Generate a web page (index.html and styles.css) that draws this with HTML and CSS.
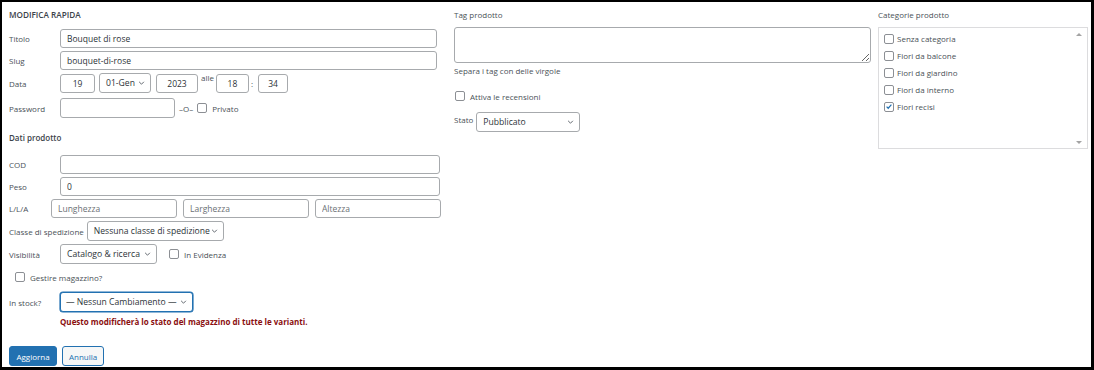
FILE: index.html
```html
<!DOCTYPE html>
<html lang="it">
<head>
    <meta charset="UTF-8">
    <title>Modifica rapida</title>
    <link rel="stylesheet" href="styles.css">
</head>
<body>
    <div class="quick-edit">
        <!-- left column -->
        <div class="col col-left">
            <h3 class="col-title caps">MODIFICA RAPIDA</h3>

            <div class="row">
                <span class="lbl">Titolo</span>
                <input class="field w-title" type="text" value="Bouquet di rose">
            </div>
            <div class="row">
                <span class="lbl">Slug</span>
                <input class="field w-title" type="text" value="bouquet-di-rose">
            </div>
            <div class="row">
                <span class="lbl">Data</span>
                <input class="field center w-day" type="text" value="19">
                <div class="select w-month"><span>01-Gen</span><svg class="chev" viewBox="0 0 8 5"><path d="M1 1l3 3 3-3"/></svg></div>
                <input class="field center w-year" type="text" value="2023">
                <span class="alle">alle</span>
                <input class="field center w-hour" type="text" value="18">
                <span class="colon">:</span>
                <input class="field center w-min" type="text" value="34">
            </div>
            <div class="row spaced">
                <span class="lbl">Password</span>
                <input class="field w-pass" type="text" value="">
                <span class="or">–O–</span>
                <span class="check"></span>
                <span class="check-label">Privato</span>
            </div>

            <h4 class="section-title">Dati prodotto</h4>

            <div class="row">
                <span class="lbl">COD</span>
                <input class="field w-long" type="text" value="">
            </div>
            <div class="row">
                <span class="lbl">Peso</span>
                <input class="field w-long" type="text" value="0">
            </div>
            <div class="row">
                <span class="lbl short">L/L/A</span>
                <div class="dims">
                    <input class="field" type="text" placeholder="Lunghezza">
                    <input class="field" type="text" placeholder="Larghezza">
                    <input class="field" type="text" placeholder="Altezza">
                </div>
            </div>
            <div class="row">
                <span class="lbl auto">Classe di spedizione</span>
                <div class="select w-ship"><span>Nessuna classe di spedizione</span><svg class="chev" viewBox="0 0 8 5"><path d="M1 1l3 3 3-3"/></svg></div>
            </div>
            <div class="row">
                <span class="lbl">Visibilità</span>
                <div class="select w-vis"><span>Catalogo &amp; ricerca</span><svg class="chev" viewBox="0 0 8 5"><path d="M1 1l3 3 3-3"/></svg></div>
                <span class="check ml-feat"></span>
                <span class="check-label">In Evidenza</span>
            </div>
            <div class="check-row">
                <span class="check"></span>
                <span class="check-label">Gestire magazzino?</span>
            </div>
            <div class="row stock">
                <span class="lbl">In stock?</span>
                <div class="select focus w-stock"><span>— Nessun Cambiamento —</span><svg class="chev" viewBox="0 0 8 5"><path d="M1 1l3 3 3-3"/></svg></div>
            </div>
            <p class="warning">Questo modificherà lo stato del magazzino di tutte le varianti.</p>

            <div class="actions">
                <span class="btn primary">Aggiorna</span>
                <span class="btn">Annulla</span>
            </div>
        </div>

        <!-- middle column -->
        <div class="col col-mid">
            <h3 class="col-title">Tag prodotto</h3>
            <textarea class="tags"></textarea>
            <p class="help">Separa i tag con delle virgole</p>
            <div class="check-row reviews">
                <span class="check"></span>
                <span class="check-label">Attiva le recensioni</span>
            </div>
            <div class="row status">
                <span class="lbl auto">Stato</span>
                <div class="select w-status"><span>Pubblicato</span><svg class="chev" viewBox="0 0 8 5"><path d="M1 1l3 3 3-3"/></svg></div>
            </div>
        </div>

        <!-- right column -->
        <div class="col col-right">
            <h3 class="col-title">Categorie prodotto</h3>
            <div class="cat-box">
                <ul class="cat-list">
                    <li><span class="check"></span>Senza categoria</li>
                    <li><span class="check"></span>Fiori da balcone</li>
                    <li><span class="check"></span>Fiori da giardino</li>
                    <li><span class="check"></span>Fiori da interno</li>
                    <li><span class="check checked"><svg viewBox="0 0 10 10"><path d="M2 5.2l2 2 4-4.6"/></svg></span>Fiori recisi</li>
                </ul>
                <span class="scroll-up"></span>
                <span class="scroll-down"></span>
            </div>
        </div>
    </div>
</body>
</html>
```

FILE: styles.css
```css
* {
    box-sizing: border-box;
}
body {
    margin: 0;
    background: #fff;
    font-family: "Open Sans", "Noto Sans", sans-serif;
    font-size: 8px;
    color: #4a5157;
}
.quick-edit {
    display: flex;
    width: 1094px;
    height: 370px;
    border: solid #000;
    border-width: 2px 3px 3px 2px;
    padding: 7px 3px 0 7px;
}
.col {
    display: flex;
    flex-direction: column;
}
.col-left {
    width: 432px;
}
.col-mid {
    width: 417px;
    margin-left: 13px;
}
.col-right {
    width: 210px;
    margin-left: 7px;
}
.col-title {
    margin: 0 0 6px 0;
    height: 12px;
    line-height: 12px;
    font-size: 8px;
    font-weight: normal;
    color: #4a5157;
}
.col-title.caps {
    margin-bottom: 8px;
    font-size: 8.2px;
    font-weight: 600;
    color: #3c434a;
}

/* rows */
.row {
    display: flex;
    align-items: center;
}
.row + .row {
    margin-top: 3px;
}
.row.spaced {
    margin-top: 5px;
}
.lbl {
    width: 51px;
    flex-shrink: 0;
}
.lbl.short {
    width: 42px;
}
.lbl.auto {
    width: auto;
    margin-right: 3px;
}

/* inputs */
.field {
    height: 19px;
    border: 1px solid #a7aaad;
    border-radius: 3px;
    padding: 0 6px;
    font-family: inherit;
    font-size: 8.5px;
    color: #2c3338;
    background: #fff;
    outline: none;
}
.field::placeholder {
    color: #6b7075;
}
.field.center {
    text-align: center;
}
.w-title { width: 377px; }
.w-long { width: 380px; }
.w-day { width: 35px; }
.w-year { width: 42px; margin-left: 5px; }
.w-hour { width: 33px; }
.w-min { width: 30px; }
.w-pass { width: 115px; height: 20px; }

.select {
    display: flex;
    align-items: center;
    justify-content: space-between;
    height: 20px;
    border: 1px solid #a7aaad;
    border-radius: 3px;
    padding: 0 5px 0 6px;
    font-size: 8.6px;
    color: #2c3338;
    background: #fff;
    white-space: nowrap;
}
.select.focus {
    border-color: #2271b1;
    box-shadow: 0 0 0 0.6px #2271b1;
}
.chev {
    width: 7px;
    height: 4px;
    fill: none;
    stroke: #50575e;
    stroke-width: 1.1;
}
.w-month { width: 52px; margin-left: 4px; }
.w-ship { width: 137px; }
.w-vis { width: 97px; }
.w-stock { width: 133px; padding-left: 5px; }
.w-status { width: 104px; }

.alle {
    align-self: flex-start;
    margin: 0 2px 0 3px;
    line-height: 10px;
}
.colon {
    margin: 0 5px 0 2px;
}
.or {
    margin: 0 4px 0 4px;
}

.dims {
    display: flex;
    gap: 6px;
}
.dims .field {
    width: 126px;
    height: 19px;
}

/* checkboxes */
.check {
    display: inline-flex;
    align-items: center;
    justify-content: center;
    width: 10px;
    height: 10px;
    border: 1px solid #8c8f94;
    border-radius: 2px;
    background: #fff;
    flex-shrink: 0;
}
.check svg {
    width: 9px;
    height: 9px;
    fill: none;
    stroke: #2271b1;
    stroke-width: 1.5;
}
.check-label {
    margin-left: 5px;
}
.ml-feat {
    margin-left: 12px;
}
.check-row {
    display: flex;
    align-items: center;
    height: 12px;
    margin: 7px 0 0 6px;
}

.section-title {
    margin: 14px 0 11px 0;
    height: 12px;
    line-height: 12px;
    font-size: 8px;
    font-weight: 600;
    color: #3c434a;
}
.row.stock {
    margin-top: 9px;
}
.warning {
    margin: 4px 0 0 51px;
    height: 12px;
    line-height: 12px;
    font-size: 8px;
    font-weight: 700;
    color: #8a0f0f;
}

/* buttons */
.actions {
    display: flex;
    gap: 5px;
    margin-top: 18px;
}
.btn {
    display: inline-flex;
    align-items: center;
    height: 20px;
    padding: 0 6px;
    border: 1px solid #2271b1;
    border-radius: 3px;
    background: #f6f7f7;
    color: #2271b1;
    font-size: 8px;
}
.btn.primary {
    background: #2271b1;
    color: #fff;
    width: 48px;
    justify-content: center;
}

/* middle */
.tags {
    width: 417px;
    height: 36px;
    margin: 0;
    border: 1px solid #a7aaad;
    border-radius: 3px;
    font-family: inherit;
}
.help {
    margin: 2px 0 0 0;
    height: 12px;
    line-height: 12px;
}
.reviews {
    margin: 13px 0 0 1px;
}
.row.status {
    margin-top: 10px;
}
.status .lbl {
    align-self: flex-start;
    margin-top: 2px;
}

/* right */
.cat-box {
    position: relative;
    width: 210px;
    height: 122px;
    border: 1px solid #dcdcde;
}
.cat-list {
    list-style: none;
    margin: 0;
    padding: 2px 0 0 5px;
}
.cat-list li {
    display: flex;
    align-items: center;
    height: 17px;
    gap: 3px;
}
.scroll-up,
.scroll-down {
    position: absolute;
    right: 5px;
    width: 0;
    height: 0;
    border-left: 3px solid transparent;
    border-right: 3px solid transparent;
}
.scroll-up {
    top: 5px;
    border-bottom: 3px solid #a3a3a3;
}
.scroll-down {
    bottom: 4px;
    border-top: 3px solid #a3a3a3;
}
```
